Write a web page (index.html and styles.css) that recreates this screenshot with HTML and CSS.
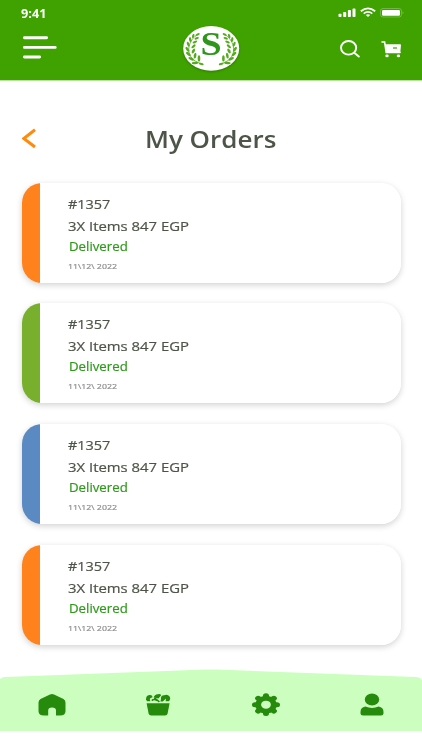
FILE: index.html
```
<!DOCTYPE html>
<html lang="en">
<head>
    <meta charset="UTF-8">
    <meta name="viewport" content="width=device-width, initial-scale=1.0">
    <title>My Orders</title>
    <link rel="stylesheet" href="styles.css">
</head>
<body>
    <div class="screen">
        <header class="header">
            <div class="status-bar">
                <span class="time">9:41</span>
                <svg class="status-icons" width="66" height="12" viewBox="0 0 66 12" fill="#fff">
                    <rect x="0.5" y="7.8" width="3" height="3.2" rx="0.8"/>
                    <rect x="5.2" y="6" width="3" height="5" rx="0.8"/>
                    <rect x="9.9" y="4" width="3" height="7" rx="0.8"/>
                    <rect x="14.5" y="2.6" width="3" height="8.4" rx="0.8"/>
                    <g fill="none" stroke="#fff" stroke-width="1.8">
                        <path d="M22.8 5.2 Q30 -0.3 37.2 5.2"/>
                        <path d="M25.7 7.6 Q30 4.2 34.3 7.6"/>
                    </g>
                    <path d="M27.8 9 Q30 7.5 32.2 9 L30 11Z"/>
                    <rect x="42.5" y="2.5" width="21" height="8.5" rx="2.4" fill="none" stroke="#fff" stroke-opacity="0.25"/>
                    <rect x="44" y="4" width="18" height="5.8" rx="1.2"/>
                    <path d="M64.7 5.3 Q66.2 6.8 64.7 8.2Z" fill-opacity="0.4"/>
                </svg>
            </div>
            <div class="toolbar">
                <svg class="menu-icon" width="36" height="24" viewBox="0 0 36 24" fill="none" stroke="#fff" stroke-width="2.9" stroke-linecap="round">
                    <path d="M2.4 2.7H24.6M2.4 12.4H33.2M2.4 22H17.6"/>
                </svg>
                <svg class="logo" width="58" height="52" viewBox="0 -6 58 52">
                    <defs>
                        <g id="wreath">
                            <path d="M14.5 9 C5 16 3.5 29 13 35 Q17 37.5 21 38" fill="none" stroke="#57aa20" stroke-width="0.8"/>
                            <g fill="#57aa20">
                                <ellipse cx="15.5" cy="8.5" rx="2.2" ry="1" transform="rotate(-25 15.5 8.5)"/>
                                <ellipse cx="11" cy="10" rx="2.2" ry="1.1" transform="rotate(-70 11 10)"/>
                                <ellipse cx="14.5" cy="12.3" rx="2.3" ry="1.1" transform="rotate(-20 14.5 12.3)"/>
                                <ellipse cx="8" cy="13.6" rx="2.5" ry="1.2" transform="rotate(-100 8 13.6)"/>
                                <ellipse cx="12.7" cy="16" rx="2.5" ry="1.1" transform="rotate(-25 12.7 16)"/>
                                <ellipse cx="6" cy="18.2" rx="2.6" ry="1.2" transform="rotate(-110 6 18.2)"/>
                                <ellipse cx="11.3" cy="20.3" rx="2.6" ry="1.2" transform="rotate(-40 11.3 20.3)"/>
                                <ellipse cx="5.2" cy="23.2" rx="2.8" ry="1.3" transform="rotate(-125 5.2 23.2)"/>
                                <ellipse cx="11.2" cy="25" rx="2.7" ry="1.3" transform="rotate(-60 11.2 25)"/>
                                <ellipse cx="6.2" cy="28" rx="2.9" ry="1.3" transform="rotate(-140 6.2 28)"/>
                                <ellipse cx="12.9" cy="29.6" rx="3" ry="1.3" transform="rotate(-80 12.9 29.6)"/>
                                <ellipse cx="9" cy="32.8" rx="3" ry="1.3" transform="rotate(-155 9 32.8)"/>
                                <ellipse cx="16.8" cy="32.4" rx="3.2" ry="1.3" transform="rotate(-90 16.8 32.4)"/>
                                <ellipse cx="12.8" cy="37" rx="3.3" ry="1.2" transform="rotate(-185 12.8 37)"/>
                                <ellipse cx="19" cy="38" rx="2.5" ry="1" transform="rotate(15 19 38)"/>
                            </g>
                        </g>
                    </defs>
                    <ellipse cx="28.2" cy="22.4" rx="28" ry="22.3" fill="#fff"/>
                    <g transform="translate(-0.8 0)">
                        <use href="#wreath"/>
                        <use href="#wreath" transform="translate(58 0) scale(-1 1)"/>
                    </g>
                    <text class="logo-letter" transform="translate(28 28.8) scale(1.12 1)">S</text>
                </svg>
                <div class="actions">
                    <svg width="20" height="18" viewBox="0 0 20 18" fill="none" stroke="#fff" stroke-width="1.9" stroke-linecap="round">
                        <ellipse cx="8.6" cy="7.8" rx="7.6" ry="6.8"/>
                        <path d="M14.2 12.8L18.8 16.6"/>
                    </svg>
                    <svg width="21" height="18" viewBox="0 0 21 18" fill="#fff">
                        <path d="M1 2H3.6L5.2 12.4H19" fill="none" stroke="#fff" stroke-width="1.6" stroke-linecap="round"/>
                        <path d="M4 4.3H19.2Q20.2 4.3 20 5.2L19.3 12Q19.2 13 18 13H5.2Z"/>
                        <rect x="12" y="7.4" width="4" height="1.2" fill="#3fa200"/>
                        <ellipse cx="6" cy="15.9" rx="1.7" ry="1.4"/>
                        <ellipse cx="17.4" cy="15.9" rx="1.7" ry="1.4"/>
                    </svg>
                </div>
            </div>
        </header>

        <main class="content">
            <div class="title-row">
                <svg class="back" width="15" height="21" viewBox="0 0 15 21" fill="none" stroke="#ff8a0c" stroke-width="3">
                    <path d="M13 1.8L1.8 10.5L13 19"/>
                </svg>
                <h1>My Orders</h1>
            </div>

            <div class="orders">
                <article class="order orange">
                    <p class="number">#1357</p>
                    <p class="items">3X Items 847 EGP</p>
                    <p class="state">Delivered</p>
                    <p class="date">11\12\ 2022</p>
                </article>
                <article class="order green">
                    <p class="number">#1357</p>
                    <p class="items">3X Items 847 EGP</p>
                    <p class="state">Delivered</p>
                    <p class="date">11\12\ 2022</p>
                </article>
                <article class="order blue">
                    <p class="number">#1357</p>
                    <p class="items">3X Items 847 EGP</p>
                    <p class="state">Delivered</p>
                    <p class="date">11\12\ 2022</p>
                </article>
                <article class="order orange">
                    <p class="number">#1357</p>
                    <p class="items">3X Items 847 EGP</p>
                    <p class="state">Delivered</p>
                    <p class="date">11\12\ 2022</p>
                </article>
            </div>
        </main>

        <nav class="bottom-nav">
            <!-- home -->
            <svg width="28" height="24" viewBox="0 0 28 24">
                <path d="M12 1.4Q14 0.4 16 1.4L25.5 6Q27.5 7.2 27.5 9.5V18Q27.5 22.5 22 22.5H18V17.5Q18 14.6 14 14.6Q10.2 14.6 10.2 17.5V22.5H6Q0.5 22.5 0.5 18V9.5Q0.5 7.2 2.5 6Z"/>
            </svg>
            <!-- basket -->
            <svg width="26" height="24" viewBox="0 0 26 24">
                <path d="M1.6 10.2H24.6L22.6 20.6Q22.2 22.5 20 22.5H6.2Q4 22.5 3.6 20.6Z"/>
                <path d="M2.2 8.2Q0.2 7 1.2 4.8Q2 1.8 5 2Q7.8 2.2 7.4 4.6Q5.2 4.4 4.8 6.2L5.4 8.2Z"/>
                <path d="M8.6 4.6Q9.4 1.4 12.8 1.2Q15.4 0.4 16.2 2.2L13.4 5.4Z"/>
                <path d="M16 6Q15.6 2.4 19 2.2Q22.6 0.8 24.4 3.2Q26.2 6 24 8.2H20.6L21 5.4L17.8 8.6L15.4 8.4Z"/>
                <path d="M6.8 7.6Q9 5.4 12 7.6M9.4 4.8L14.4 8.8" fill="none" stroke="#268b0c" stroke-width="1.6"/>
            </svg>
            <!-- settings -->
            <svg width="30" height="24" viewBox="0 0 30 24">
                <g transform="translate(15 11.7) scale(1.22 1)">
                    <circle r="8.9"/>
                    <g stroke="#268b0c" stroke-width="5" stroke-linecap="round">
                        <path d="M0 -8.9V8.9M-9 0H9M-6.4 -6.4L6.4 6.4M-6.4 6.4L6.4 -6.4"/>
                    </g>
                    <circle r="4" fill="#ccffbf"/>
                </g>
            </svg>
            <!-- profile -->
            <svg width="24" height="24" viewBox="0 0 24 24">
                <ellipse cx="12" cy="6.5" rx="7.2" ry="6"/>
                <path d="M5.4 13.6Q8.6 15 12 15T18.6 13.6Q23.5 14.4 23.5 19V20.6Q23.5 22.5 21 22.5H3Q0.5 22.5 0.5 20.6V19Q0.5 14.4 5.4 13.6Z"/>
            </svg>
        </nav>
    </div>
</body>
</html>
```

FILE: styles.css
```
:root {
    --header: #3fa200;
    --nav: #ccffbf;
    --icon: #268b0c;
    --text: #4c5547;
    --orange: #ff821c;
    --green: #78b02e;
    --blue: #5b8ac2;
}

* {
    box-sizing: border-box;
    margin: 0;
    padding: 0;
}

body {
    background: #fff;
    color: var(--text);
    font-family: 'Open Sans', 'Noto Sans', sans-serif;
}

svg {
    display: block;
}

.screen {
    width: 422px;
    height: 731px;
    display: flex;
    flex-direction: column;
    overflow: hidden;
}

.header {
    height: 80px;
    background: var(--header);
    box-shadow: 0 1px 1px rgba(63, 162, 0, 0.35);
    flex-shrink: 0;
}

.status-bar {
    height: 26px;
    padding: 6px 18px 0 21px;
    display: flex;
    justify-content: space-between;
}

.time {
    color: #fff;
    font-size: 12px;
    font-weight: 700;
    line-height: 16px;
    transform: scaleX(1.06);
    transform-origin: left;
}

.toolbar {
    height: 46px;
    padding: 0 20px 0 22px;
    display: grid;
    grid-template-columns: 1fr 58px 1fr;
}

.menu-icon {
    margin-top: 9px;
}

.logo {
    margin-top: -6px;
    overflow: visible;
    filter: drop-shadow(0 1px 1px rgba(0, 0, 0, 0.25));
}

.logo-letter {
    fill: #2f961c;
    font-family: 'Liberation Serif', serif;
    font-size: 34px;
    font-weight: 700;
    text-anchor: middle;
}

.actions {
    display: flex;
    justify-content: flex-end;
    gap: 21px;
    padding-top: 14px;
}

.content {
    flex: 1;
    padding: 0 21px 0 22px;
}

.title-row {
    height: 102.5px;
    display: flex;
    align-items: flex-start;
}

.back {
    margin-top: 48px;
}

h1 {
    margin: 42px 0 0 108px;
    font-size: 23px;
    font-weight: 600;
    line-height: 34px;
    transform: scaleX(1.13);
    transform-origin: left;
}

.orders {
    display: flex;
    flex-direction: column;
    gap: 20.7px;
}

.order {
    height: 100px;
    padding: 10px 0 0 46px;
    border-radius: 20px;
    background: linear-gradient(to right, var(--stripe) 18px, #fff 18px);
    box-shadow: 0 2px 6px rgba(0, 0, 0, 0.18);
}

.orange {
    --stripe: var(--orange);
}

.green {
    --stripe: var(--green);
}

.blue {
    --stripe: var(--blue);
}

.order p {
    width: max-content;
    transform-origin: left;
    white-space: pre;
}

.number,
.items {
    font-size: 13px;
    font-weight: 500;
    line-height: 22px;
    transform: scaleX(1.145);
    -webkit-text-stroke: 0.2px currentColor;
}

.number {
    transform: scaleX(1.11);
}

.state {
    margin-left: 1px;
    color: #2f9a1b;
    font-size: 12.5px;
    font-weight: 500;
    line-height: 19px;
    transform: scaleX(1.06);
    -webkit-text-stroke: 0.2px currentColor;
}

.date {
    color: #8e8e8e;
    font-size: 8px;
    font-weight: 500;
    line-height: 19px;
    transform: scaleX(1.1);
    -webkit-text-stroke: 0.2px currentColor;
}

.bottom-nav {
    height: 62px;
    padding: 24px 38px 0;
    display: flex;
    justify-content: space-between;
    flex-shrink: 0;
    background: var(--nav);
    clip-path: path('M0 10 Q2 8 5 8 L205 0.5 Q211 0.3 217 0.5 L416 8 Q420 8 422 11 V62 H0 Z');
}

.bottom-nav svg {
    fill: var(--icon);
}
```
